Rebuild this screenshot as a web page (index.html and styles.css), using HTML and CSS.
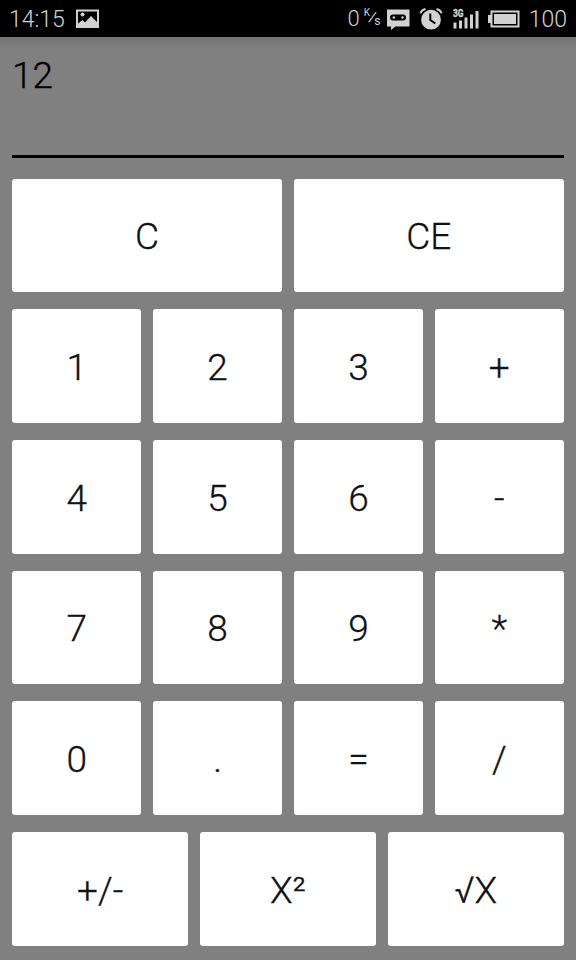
FILE: index.html
```html
<!DOCTYPE html>
<html lang="en">
<head>
    <meta charset="UTF-8">
    <meta name="viewport" content="width=device-width, initial-scale=1.0">
    <title>Calculator</title>
    <link rel="stylesheet" href="styles.css">
</head>
<body>
    <div class="status-bar">
        <span class="clock">14:15</span>
        <svg class="icon-picture" width="24" height="20" viewBox="0 0 24 20">
            <path fill="#d2d2d2" fill-rule="evenodd" d="M0 0.500h23v18.500H0z M2 2.500v12L6.500 11l2.500 2.500 6-6.500 6 6v-10.500z"/>
            <circle cx="6.500" cy="5.500" r="2" fill="#d2d2d2"/>
        </svg>
        <div class="status-right">
            <span class="speed">0</span>
            <span class="unit"><span class="unit-k">K</span><span class="unit-slash">/</span><span class="unit-s">s</span></span>
            <svg class="icon-message" width="24" height="22" viewBox="0 0 24 22">
                <path fill="#d2d2d2" d="M1 0.500h22.500v17H9.500l-4.500 3.500v-3.500h-4z"/>
                <rect x="4" y="5.500" width="16" height="6" rx="3" fill="#000"/>
                <circle cx="7.800" cy="8.500" r="1.200" fill="#d2d2d2"/>
                <circle cx="16.500" cy="8.500" r="1.200" fill="#d2d2d2"/>
            </svg>
            <svg class="icon-alarm" width="24" height="24" viewBox="0 0 24 24">
                <circle cx="12" cy="12.700" r="9.900" fill="#d2d2d2"/>
                <path fill="none" stroke="#d2d2d2" stroke-width="2" d="M1.500 6.200Q2.500 3 6.500 2 M22.500 6.200Q21.500 3 17.500 2"/>
                <path fill="none" stroke="#000" stroke-width="2" d="M11.300 6.500v6.500l5 3.500"/>
            </svg>
            <svg class="icon-signal" width="26" height="22" viewBox="0 0 26 22">
                <text class="network" x="0" y="8.500" textLength="10.500" lengthAdjust="spacingAndGlyphs">3G</text>
                <g fill="#d2d2d2">
                    <rect x="0.500" y="14.500" width="3" height="6"/>
                    <rect x="6" y="12.500" width="3" height="8"/>
                    <rect x="11.500" y="9.500" width="3" height="11"/>
                    <rect x="17" y="6.500" width="3" height="14"/>
                    <rect x="22.500" y="3" width="3" height="17.500"/>
                </g>
            </svg>
            <svg class="icon-battery" width="32" height="18" viewBox="0 0 32 18">
                <rect x="3.500" y="1.500" width="27" height="15" fill="none" stroke="#d2d2d2" stroke-width="2"/>
                <rect x="0" y="5" width="3" height="8" fill="#d2d2d2"/>
                <rect x="6" y="4" width="22" height="10" fill="#d2d2d2"/>
            </svg>
            <span class="battery-level">100</span>
        </div>
    </div>
    <div class="calculator">
        <div class="display">12</div>
        <div class="row">
            <button>C</button>
            <button>CE</button>
        </div>
        <div class="row">
            <button>1</button>
            <button>2</button>
            <button>3</button>
            <button>+</button>
        </div>
        <div class="row">
            <button>4</button>
            <button>5</button>
            <button>6</button>
            <button>-</button>
        </div>
        <div class="row">
            <button>7</button>
            <button>8</button>
            <button>9</button>
            <button>*</button>
        </div>
        <div class="row">
            <button>0</button>
            <button>.</button>
            <button>=</button>
            <button>/</button>
        </div>
        <div class="row">
            <button>+/-</button>
            <button>X²</button>
            <button>√X</button>
        </div>
    </div>
</body>
</html>
```
FILE: styles.css
```css
* {
    box-sizing: border-box;
}
body {
    margin: 0;
    height: 960px;
    overflow: hidden;
    background-color: #808080;
    font-family: Roboto, "Liberation Sans", sans-serif;
    font-weight: 300;
}
.status-bar {
    display: flex;
    align-items: center;
    height: 37px;
    padding: 0 9px;
    background-color: #000;
    color: #d2d2d2;
    font-size: 23px;
    line-height: 37px;
}
.clock {
    width: 67px;
    padding-top: 2px;
}
.status-right {
    display: flex;
    align-items: center;
    margin-left: auto;
}
.speed {
    font-size: 22px;
}
.unit {
    display: flex;
    width: 15px;
    margin: 0 7px 0 4px;
    font-size: 10px;
    font-weight: 400;
    line-height: 14px;
}
.unit-k {
    margin-top: -3px;
}
.unit-slash {
    margin: 1px 0 0 -1px;
    font-size: 15px;
    transform: rotate(15deg);
}
.unit-s {
    margin-top: 5px;
    margin-left: -1px;
    font-size: 12px;
}
.icon-message {
    margin: 2px 9px 0 0;
}
.icon-alarm {
    margin-right: 10px;
}
.icon-signal {
    margin-right: 9px;
}
.icon-battery {
    margin-right: 9px;
}
.network {
    fill: #d2d2d2;
    stroke: #d2d2d2;
    stroke-width: 0.4px;
    font-size: 11px;
    font-weight: 700;
}
.battery-level {
    padding-top: 2px;
}
.calculator {
    display: flex;
    flex-direction: column;
    gap: 17px;
    height: 923px;
    padding: 0 12px 14.5px;
    background: linear-gradient(#757575, #808080 12px);
}
.display {
    height: 121px;
    margin-bottom: 3.5px;
    padding-top: 16px;
    border-bottom: 3px solid #000;
    color: #000;
    font-size: 37px;
    line-height: 45px;
    -webkit-text-stroke: 0.3px #000;
}
.row {
    display: flex;
    flex: 1;
    gap: 11.5px;
}
button {
    flex: 1 1 0;
    min-width: 0;
    padding: 3px 0 0;
    border: none;
    border-radius: 3px;
    background-color: #fff;
    color: #111;
    font-family: inherit;
    font-size: 37px;
    font-weight: 300;
    -webkit-text-stroke: 0.3px #111;
}
```
